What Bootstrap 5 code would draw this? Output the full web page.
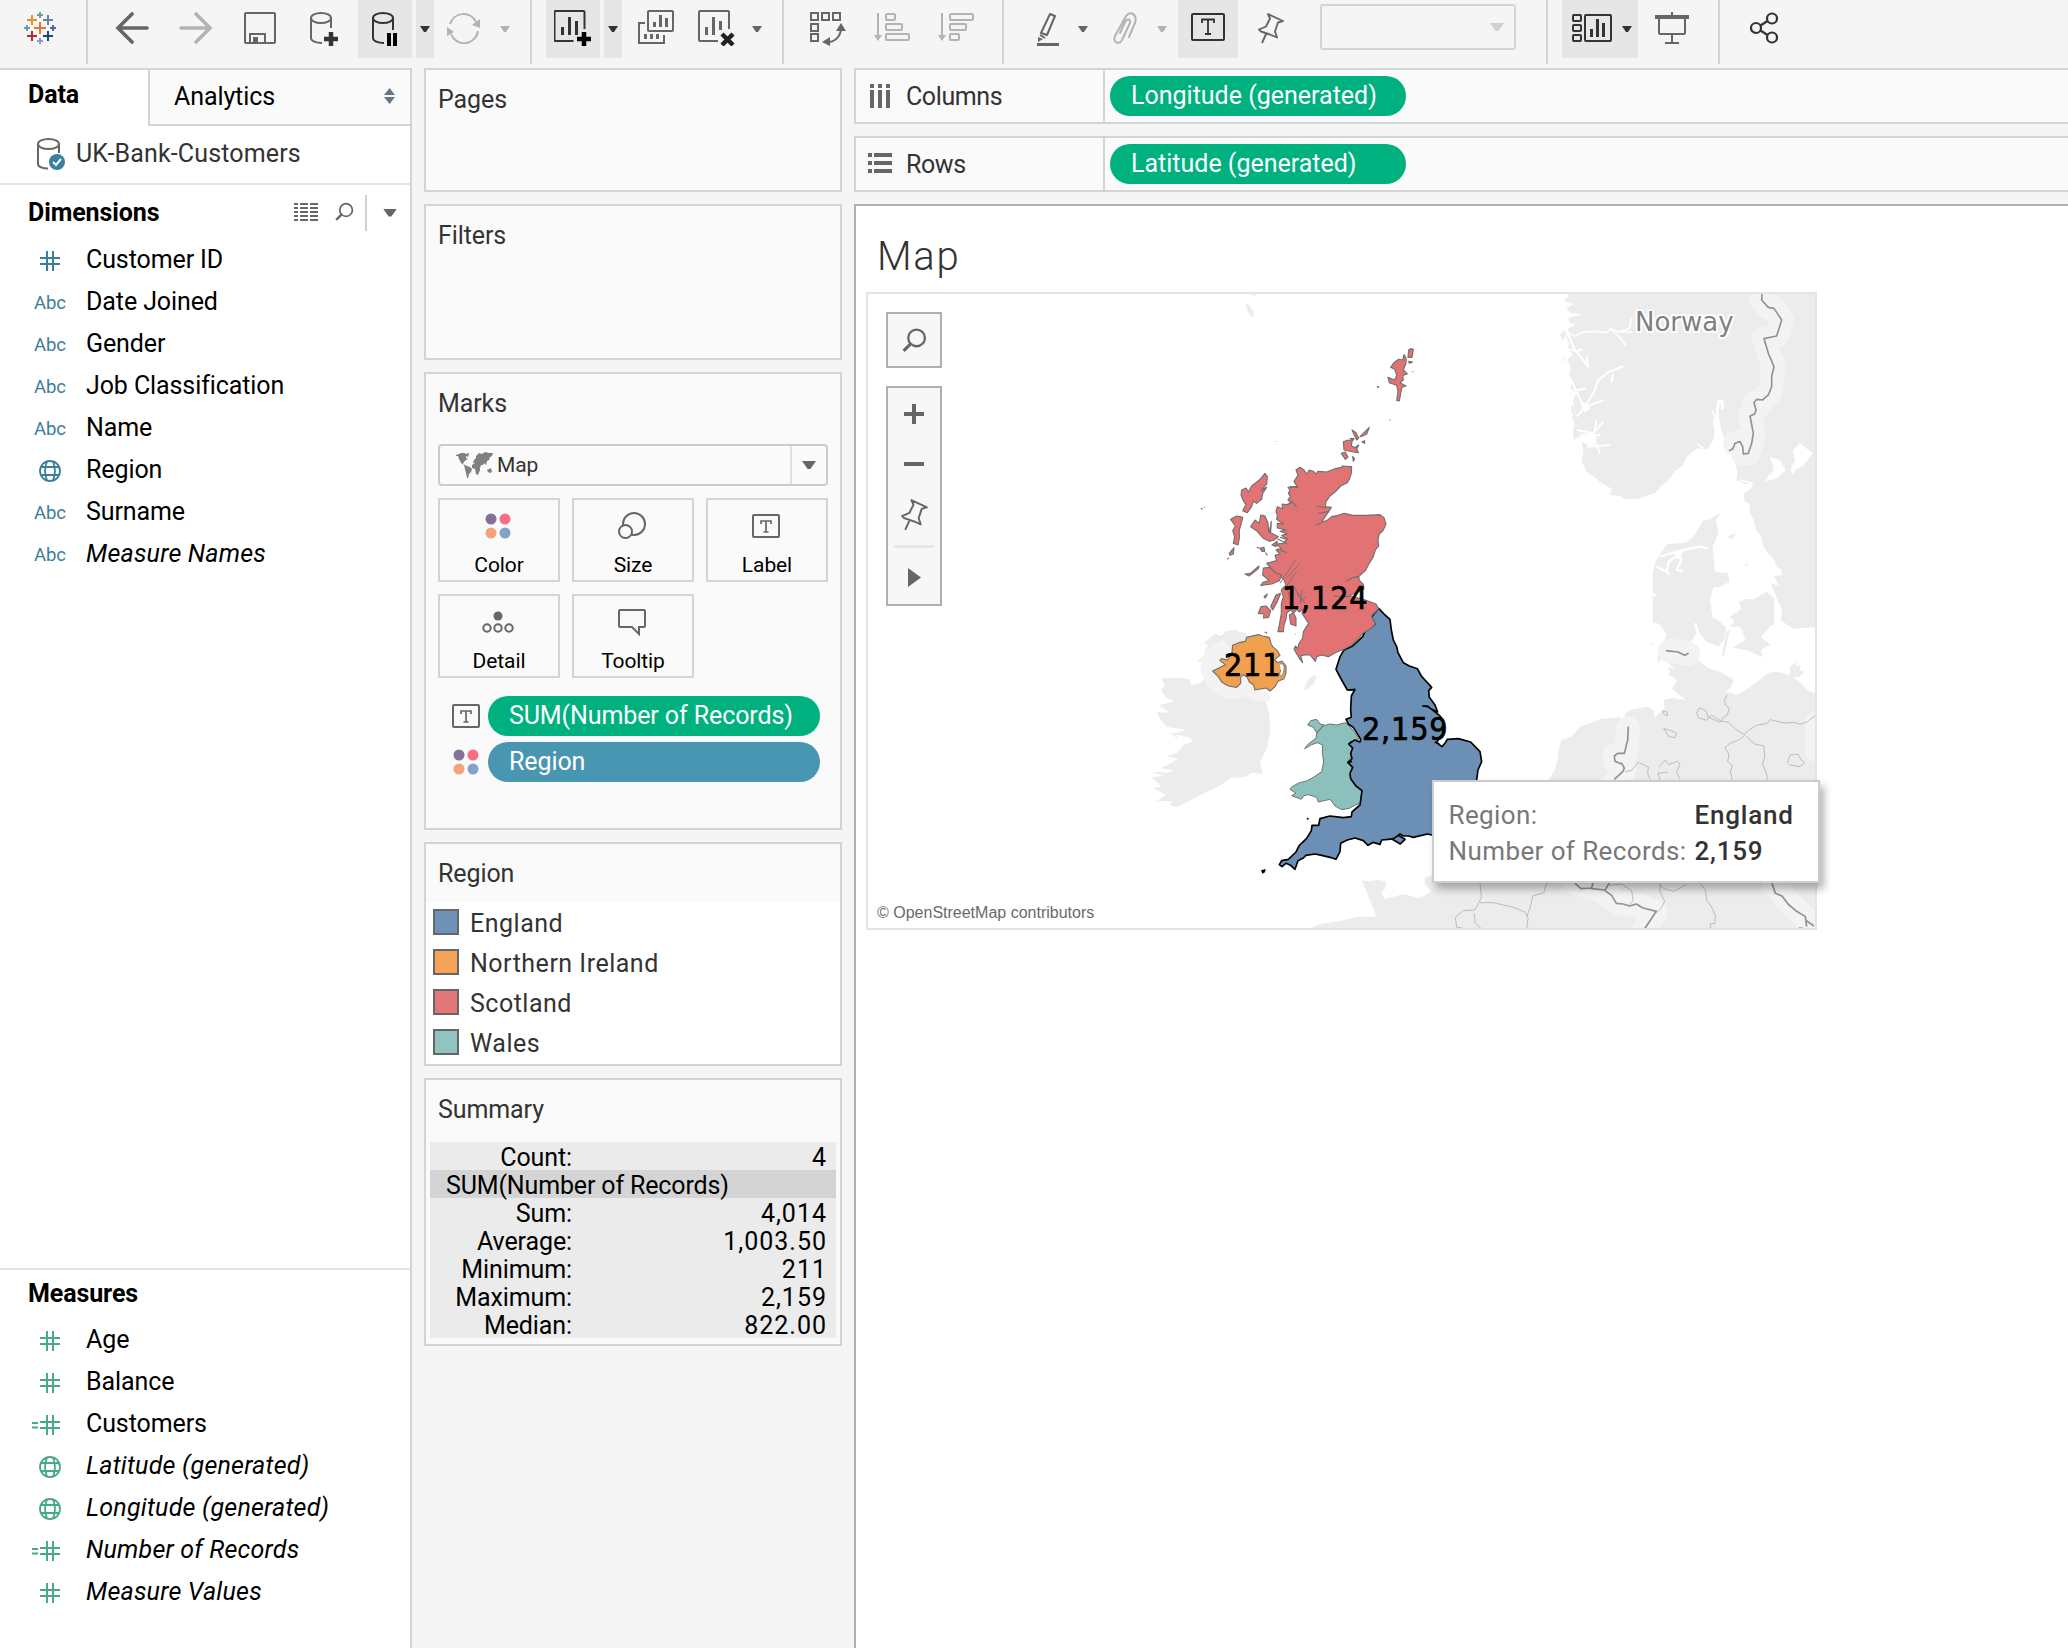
<!DOCTYPE html>
<html lang="en">
<head>
<meta charset="utf-8">
<meta name="viewport" content="width=device-width, initial-scale=1">
<title>Map - UK-Bank-Customers</title>
<link href="https://cdn.jsdelivr.net/npm/bootstrap@5.3.0/dist/css/bootstrap.min.css" rel="stylesheet">
<style>
  html, body { height: 1648px; overflow: hidden; }
  body { background: #f5f5f5; color: #000; font-family: Roboto, "Liberation Sans", sans-serif; font-size: 25px; line-height: 1; width: 2068px; letter-spacing: -.1px; }
  svg { display: block; flex: none; }
  .ln { stroke: #666; fill: none; stroke-width: 2; }
  .tools { height: 68px; }
  .tools > * { margin-top: 12px; flex: none; }
  .tools > .hi { margin-top: 10px; }
  .tools > .rule { width: 2px; height: 64px; margin-top: 0; background: #d4d4d4; }
  .tools > .held { height: 58px; margin-top: 0; background: #e6e6e6; padding-top: 10px; }
  .tools > .tri { margin-top: 26px; }
  .tri { width: 10px; height: 6px; background: #666; clip-path: polygon(0 0, 100% 0, 60% 100%, 40% 100%); }
  .tri.pale { background: #b3b3b3; } .tri.dark { background: #333; }
  .tri.big { width: 14px; height: 8px; }
  .w18 { width: 18px; } .w54 { width: 54px; } .w60 { width: 60px; } .w76 { width: 76px; }
  .held .tri { margin-top: 16px; }
  .g4 { margin-left: 4px; } .g10 { margin-left: 10px; } .g11 { margin-left: 11px; } .g13 { margin-left: 13px; } .g14 { margin-left: 14px; } .g16 { margin-left: 16px; } .g17 { margin-left: 17px; }
  .g18 { margin-left: 18px; } .g19 { margin-left: 19px; } .g20 { margin-left: 20px; } .g24 { margin-left: 24px; } .g25 { margin-left: 25px; } .g26 { margin-left: 26px; }
  .g27 { margin-left: 27px; } .g28 { margin-left: 28px; } .g29 { margin-left: 29px; } .g30 { margin-left: 30px; } .g31 { margin-left: 31px; } .g33 { margin-left: 33px; }
  .g34 { margin-left: 34px; } .g36 { margin-left: 36px; }
  .t3 { margin-top: 3px; } .t6 { margin-top: 6px; } .t18 { margin-top: 18px; }
  .combo { width: 196px; height: 46px; border: 2px solid #d4d4d4; border-radius: 3px; padding: 0 10px; }
  .tools > .combo { margin-top: 4px; }
  .combo .tri { background: #d0d0d0; width: 14px; height: 8px; }

  .work { height: 1580px; }
  .datapane { width: 412px; background: #fff; border: solid #d4d4d4; border-width: 2px 2px 0 0; }
  .tabA { width: 148px; height: 56px; padding: 6px 0 0 28px; line-height: 38px; font-weight: 700; }
  .tabB { height: 56px; background: #fafafa; border: solid #d4d4d4; border-width: 0 0 2px 2px; padding: 0 15px 2px 24px; }
  .source { height: 59px; border-bottom: 2px solid #e4e4e4; padding: 0 0 2px 36px; color: #333; gap: 11px; letter-spacing: .15px; }
  .headrow { padding: 0 13px 0 28px; font-weight: 700; }
  .headrow.dim { height: 55px; }
  .headrow.dim svg { margin-top: -2px; }
  .headrow.mea { height: 50px; padding-bottom: 4px; }
  .vr2 { width: 2px; height: 36px; background: #d0d0d0; }
  .fieldrow { height: 42px; }
  .fieldrow .kind { width: 86px; color: #3a7d9c; font-size: 18.5px; padding: 1px 0 0 34px; }
  .fieldrow .txt { padding-bottom: 3px; }
  .fieldrow .txt.fst-italic { letter-spacing: .22px; }
  .kind svg { margin-left: -2px; margin-top: -1px; }
  .green .kind { color: #47a987; }
  .dims { height: 1085px; border-bottom: 2px solid #e4e4e4; }

  .shelfcol { width: 418px; margin-left: 12px; gap: 12px; }
  .pane { background: #fafafa; border: 2px solid #d4d4d4; color: #333; }
  .pane .cap { padding: 16px 0 0 12px; line-height: 28px; }
  .h124 { height: 124px; } .h156 { height: 156px; } .h458 { height: 458px; } .h224 { height: 224px; } .h268 { height: 268px; }
  .marktype { margin: 26px 12px 0; height: 42px; border: 2px solid #ccc; border-radius: 4px; font-size: 21px; }
  .marktype .more { width: 36px; border-left: 2px solid #e0e0e0; }
  .btns { margin: 12px 12px 0; gap: 12px; }
  .mk { width: 122px; height: 84px; border: 2px solid #d4d4d4; font-size: 21px; color: #000; }
  .mk .pic { height: 52px; margin-bottom: 3px; padding-right: 2px; }
  .pill { height: 40px; border-radius: 20px; color: #fff; padding: 0 0 1px 21px; background: #00b180; }
  .pill.blue { background: #4996b2; }
  .enc { margin-left: 26px; width: 368px; }
  .enc .pill { width: 332px; }
  .legend { height: 162px; background: #fff; margin-top: 14px; padding: 5px 0 0 7px; }
  .leg { height: 40px; gap: 11px; color: #333; letter-spacing: .5px; }
  .leg span { margin-top: -8px; }
  .sw { width: 26px; height: 26px; border: 2px solid #666; margin-top: -10px; }
  .stats { margin: 18px 4px 0; background: #ebebeb; color: #000; }
  .stats > div { height: 28px; line-height: 28px; padding-top: 2px; }
  .stats .k { width: 142px; text-align: right; }
  .stats .v { padding-right: 9px; letter-spacing: 1px; }
  .stats .grp { background: #d4d4d4; padding-left: 16px; letter-spacing: -.15px; }

  .viewcol { margin-left: 12px; }
  .shelf { height: 56px; border: solid #d4d4d4; border-width: 2px 0 2px 2px; background: #fafafa; margin-bottom: 12px; color: #333; }
  .shelf .who { width: 249px; border-right: 2px solid #d4d4d4; padding-left: 12px; gap: 14px; letter-spacing: -.4px; }
  .shelf .pill { width: 296px; margin: 6px 0 0 5px; padding-left: 21px; padding-bottom: 2px; letter-spacing: 0; }
  .view { background: #fff; border: solid #b0b0b0; border-width: 2px 0 0 2px; }
  .vtitle { font-size: 40px; font-weight: 300; height: 86px; padding: 31px 0 0 21px; color: #333; letter-spacing: 1.7px; }
  .mapbox { width: 951px; height: 638px; margin-left: 10px; }
  .ctl { background: #f7f7f7; border: 2px solid #b0b0b0; width: 56px; left: 20px; }
  .ctl.find { top: 20px; height: 56px; } .ctl.nav4 { top: 94px; height: 220px; }
  .tip { left: 566px; top: 488px; width: 388px; height: 103px; background: #fff; border: 2px solid #ccc; box-shadow: 4px 6px 8px rgba(0,0,0,.3); padding: 14.5px 0 0 14.5px; font-size: 26px; line-height: 36px; color: #787878; letter-spacing: .4px; }
  .tip .a { width: 246px; } .tip .b { color: #333; font-weight: 500; letter-spacing: .8px; }
  .land { fill: #ececec; } .sea { fill: #fff; } .fj { stroke: #fff; fill: none; stroke-linejoin: round; }
  .halo { stroke: #f3f3f3; stroke-width: 72; fill: none; stroke-linejoin: round; stroke-linecap: round; }
  .bord { stroke: #929292; stroke-width: 5; fill: none; stroke-linejoin: round; }
  .prov { stroke: #b2b2b2; stroke-width: 2.5; fill: none; stroke-linejoin: round; }
  .sco { fill: #e27375; stroke: #707070; stroke-width: 3.4; stroke-linejoin: round; }
  .nir { fill: #f1a04f; stroke: #707070; stroke-width: 3.4; stroke-linejoin: round; }
  .wal { fill: #8cc0bc; stroke: #707070; stroke-width: 3; stroke-linejoin: round; }
  .eng { fill: #6c8fb5; stroke: #000; stroke-width: 5; stroke-linejoin: round; }
  .num { font: 400 32px "DejaVu Sans Condensed", "DejaVu Sans", sans-serif; font-stretch: condensed; letter-spacing: .8px; stroke: #000; stroke-width: .7px; }
  .town { font: 26px "DejaVu Sans", sans-serif; letter-spacing: 0; fill: #808080; stroke: #fff; stroke-width: 4px; paint-order: stroke; stroke-linejoin: round; }
  .attrib { font: 16px "Liberation Sans", sans-serif; letter-spacing: 0; fill: #6a6a6a; }
</style>
</head>
<body>
<svg width="0" height="0" class="position-absolute">
  <symbol id="hash" viewBox="0 0 36 24"><path d="M15 2v20M21 2v20M8 9h20M8 15h20" stroke="currentColor" stroke-width="2" fill="none"/></symbol>
  <symbol id="calc" viewBox="0 0 36 24"><path d="M15 2v20M21 2v20M8 9h20M8 15h20M0 10h6M0 14.500h6" stroke="currentColor" stroke-width="2" fill="none"/></symbol>
  <symbol id="globe" viewBox="0 0 36 24"><g stroke="currentColor" stroke-width="1.800" fill="none"><circle cx="18" cy="12" r="10"/><path d="M9 8h18M9 16h18M15 2.500c-2.500 6-2.500 13 0 19M21 2.500c2.500 6 2.500 13 0 19"/></g></symbol>
  <symbol id="tbox" viewBox="0 0 28 24"><rect x="1" y="1" width="26" height="22" rx="1" fill="none" stroke="#666" stroke-width="2"/><path d="M9 10V7h10v3M14 7v11M11.500 18h5" fill="none" stroke="#666" stroke-width="1.700"/></symbol>
  <symbol id="dots" viewBox="0 0 26 26"><circle cx="6" cy="6" r="5.500" fill="#857098"/><circle cx="20" cy="6" r="5.500" fill="#f76f80"/><circle cx="6" cy="20" r="5.500" fill="#f0a579"/><circle cx="20" cy="20" r="5.500" fill="#82a2ca"/></symbol>
  <symbol id="pin" viewBox="0 0 26 32"><path d="M10 2l15 7-5 1.500-3 9 2 6-7-3-9-3-2-2 7-3 4-8zM8.500 21L4 31" fill="none" stroke="#666" stroke-width="1.900" stroke-linejoin="round"/></symbol>
  <symbol id="lens" viewBox="0 0 24 24"><circle cx="14" cy="9.500" r="8" fill="none" stroke="#666" stroke-width="2.200"/><path d="M8.500 15L1.500 22" stroke="#666" stroke-width="3"/></symbol>
</svg>

<header class="tools d-flex align-items-start">
  <svg class="g24" width="32" height="32" viewBox="0 0 32 32" fill="none"><path d="M16 10v12M10 16h12" stroke="#e8762c" stroke-width="2"/><path d="M8 3v10M3 8h10" stroke="#eb912c" stroke-width="2"/><path d="M24 3v10M19 8h10" stroke="#5c8aa8" stroke-width="2"/><path d="M8 19v10M3 24h10" stroke="#c72035" stroke-width="2"/><path d="M24 19v10M19 24h10" stroke="#1f457e" stroke-width="2"/><path d="M16 0v6M13 3h6M3 13v6M0 16h6" stroke="#7199a6" stroke-width="2"/><path d="M29 13v6M26 16h6" stroke="#5b6591" stroke-width="2"/><path d="M16 26v6M13 29h6" stroke="#8e9cc0" stroke-width="2"/></svg>
  <i class="rule g30"></i>
  <svg class="g27" width="34" height="32" viewBox="0 0 34 32"><path d="M32 16H3M17 2L3 16l14 14" fill="none" stroke="#666" stroke-width="3.600" stroke-linecap="round"/></svg>
  <svg class="g30" width="34" height="32" viewBox="0 0 34 32"><path d="M2 16h29M17 2l14 14-14 14" fill="none" stroke="#b3b3b3" stroke-width="3.600" stroke-linecap="round"/></svg>
  <svg class="g31" width="32" height="32" viewBox="0 0 32 32"><rect x="1" y="1" width="30" height="30" rx="1" class="ln"/><path d="M6 31V22h15v9" class="ln"/><path d="M9 25h5v6H9z" fill="#666"/></svg>
  <svg class="g34" width="28" height="34" viewBox="0 0 28 34"><path d="M1 6v20c0 3 5 5 11 5M21 6v10" class="ln"/><ellipse cx="11" cy="6" rx="10" ry="5" class="ln"/><path d="M21 20v14M14 27h14" stroke="#333" stroke-width="4.500"/></svg>
  <div class="held w54 g20"><svg class="mx-auto" width="26" height="38" viewBox="0 0 26 38"><g fill="none" stroke="#333" stroke-width="2"><path d="M1 8v20c0 3 5 5 11 5M21 8v12"/><ellipse cx="11" cy="8" rx="10" ry="5"/></g><path d="M15 23h4v13h-4zM21 23h4v13h-4z"/></svg></div>
  <div class="held w18 g4"><div class="tri dark mx-auto"></div></div>
  <svg class="g13" width="33" height="32" viewBox="0 0 33 32"><path d="M3 12A14 14 0 0 1 29 10M31 19A14 14 0 0 1 4 22" fill="none" stroke="#b3b3b3" stroke-width="2"/><path d="M33 7v9l-8-3zM0 15v9l7-4z" fill="#b3b3b3"/></svg>
  <i class="tri pale g20"></i>
  <i class="rule g20"></i>
  <div class="held w54 g14"><svg class="ms-2" width="38" height="38" viewBox="0 0 38 38"><path d="M30 19V2a1 1 0 0 0-1-1H1a1 1 0 0 0-1 1v28a1 1 0 0 0 1 1h18" fill="none" stroke="#333" stroke-width="2" transform="translate(.5 0)"/><path d="M7 17h3v8H7zM14 7h3v18h-3zM21 11h3v14h-3z" fill="#333"/><path d="M30 22v14M23 29h14" stroke="#000" stroke-width="4.500"/></svg></div>
  <div class="held w18 g4"><div class="tri dark mx-auto"></div></div>
  <svg class="g16 hi" width="36" height="34" viewBox="0 0 36 34"><rect x="10" y="1" width="25" height="20" rx="1" class="ln"/><path d="M7 13H1v20h25v-8" class="ln"/><path d="M15 12h3v5h-3zM21 5h3v12h-3zM27 8h3v9h-3zM6 24h3v5H6zM12 24h3v5h-3zM18 24h3v5h-3z" fill="#666"/></svg>
  <svg class="g24 hi" width="37" height="36" viewBox="0 0 37 36"><path d="M31 19V2a1 1 0 0 0-1-1H2a1 1 0 0 0-1 1v28a1 1 0 0 0 1 1h18" class="ln"/><path d="M7 17h3v8H7zM14 7h3v18h-3zM21 11h3v9h-3z" fill="#666"/><path d="M24 24l11 11M35 24L24 35" stroke="#222" stroke-width="4.500"/></svg>
  <i class="tri g17"></i>
  <i class="rule g20"></i>
  <svg class="g26" width="36" height="34" viewBox="0 0 36 34"><g class="ln"><rect x="1" y="1" width="7" height="7"/><rect x="12" y="1" width="7" height="7"/><rect x="23" y="1" width="7" height="7"/><rect x="1" y="12" width="7" height="7"/><rect x="1" y="22" width="7" height="7"/><path d="M31 16c0 9-7 14-13 14"/></g><path d="M31 11l5 8H26zM12 30l8-5v9z" fill="#666"/></svg>
  <svg class="g28" width="36" height="32" viewBox="0 0 36 32"><g fill="none" stroke="#b3b3b3" stroke-width="2"><path d="M4 1v26"/><rect x="12" y="2" width="9" height="6" rx="1"/><rect x="12" y="12" width="16" height="6" rx="1"/><rect x="12" y="22" width="23" height="6" rx="1"/></g><path d="M0 23h8l-4 6z" fill="#b3b3b3"/></svg>
  <svg class="g28" width="36" height="32" viewBox="0 0 36 32"><g fill="none" stroke="#b3b3b3" stroke-width="2"><path d="M4 1v26"/><rect x="12" y="2" width="23" height="6" rx="1"/><rect x="12" y="12" width="16" height="6" rx="1"/><rect x="12" y="22" width="9" height="6" rx="1"/></g><path d="M0 23h8l-4 6z" fill="#b3b3b3"/></svg>
  <i class="rule g28"></i>
  <svg class="g33" width="22" height="34" viewBox="0 0 22 34"><path d="M13 2l5 2-8 19-6-2zM3 23l5 3" class="ln" stroke-linejoin="round"/><path d="M1 25l5 2-5 3zM0 31h22v3H0z" fill="#666"/></svg>
  <i class="tri g19"></i>
  <svg class="g25" width="24" height="32" viewBox="0 0 24 32"><path d="M16 25l6-14c3-9-6-14-10-5L2 24c-3 7 5 9 7 4l8-17c1-4-3-5-5-1L7 21" fill="none" stroke="#b3b3b3" stroke-width="2" stroke-linecap="round"/></svg>
  <i class="tri pale g20"></i>
  <div class="held w60 g11"><svg class="mx-auto t3" width="34" height="28" viewBox="0 0 34 28"><rect x="1" y="1" width="32" height="26" rx="1" fill="none" stroke="#333" stroke-width="2"/><path d="M11 10V6.500h12V10M17 6.500V21M14 21h6" fill="none" stroke="#333" stroke-width="1.800"/></svg></div>
  <svg class="g20" width="26" height="32"><use href="#pin"/></svg>
  <div class="combo g36 d-flex align-items-center justify-content-end"><div class="tri"></div></div>
  <i class="rule g30"></i>
  <div class="held w76 g14 d-flex"><svg class="g10" width="40" height="34" viewBox="0 0 40 34"><g fill="none" stroke="#333" stroke-width="2"><rect x="1" y="5" width="8" height="6" rx="1"/><rect x="1" y="15" width="8" height="6" rx="1"/><rect x="1" y="25" width="8" height="6" rx="1"/><rect x="13" y="5" width="26" height="26" rx="1"/></g><path d="M18 19h3v8h-3zM24 9h3v18h-3zM30 13h3v14h-3z" fill="#333"/></svg><div class="tri dark g10"></div></div>
  <svg class="g17" width="34" height="32" viewBox="0 0 34 32"><path d="M0 3h34v4H0z" fill="#666"/><path d="M17 0v4M4 6v15a1 1 0 0 0 1 1h24a1 1 0 0 0 1-1V6M17 22v8M10 31h14" class="ln"/></svg>
  <i class="rule g29"></i>
  <svg class="g30" width="28" height="32" viewBox="0 0 28 32"><g fill="none" stroke="#333" stroke-width="2.200"><circle cx="6" cy="16" r="5"/><circle cx="22" cy="6.500" r="5"/><circle cx="22" cy="25.500" r="5"/><path d="M10.500 13.500l7-4.500M10.500 18.500l7 4.500"/></g></svg>
</header>

<main class="work d-flex">
  <aside class="datapane d-flex flex-column flex-shrink-0">
    <div class="d-flex">
      <div class="tabA">Data</div>
      <div class="tabB flex-grow-1 d-flex align-items-center justify-content-between"><span>Analytics</span>
        <svg width="11" height="16" viewBox="0 0 11 16"><path d="M5.500 0l5.500 7H0zM0 9h11l-5.500 7z" fill="#66758a"/></svg></div>
    </div>
    <div class="source d-flex align-items-center">
      <svg width="29" height="32" viewBox="0 0 29 32"><path d="M2 6v20c0 3 5 4.500 10 4.500M23 6v9" class="ln"/><ellipse cx="12.500" cy="6" rx="10.500" ry="5" class="ln"/><circle cx="21" cy="24" r="8" fill="#3a7f9e"/><path d="M17 24l3 3 5-6" fill="none" stroke="#fff" stroke-width="2"/></svg>
      <span>UK-Bank-Customers</span>
    </div>
    <div class="dims">
      <div class="headrow dim d-flex align-items-center"><span class="me-auto">Dimensions</span>
        <svg width="24" height="18" viewBox="0 0 24 18"><path d="M0 1h24M0 5h24M0 9h24M0 13h24M0 17h24" stroke="#666" stroke-width="2"/><path d="M5 0v18M15 0v18" stroke="#fff" stroke-width="2"/></svg>
        <svg class="g17" width="19" height="20"><use href="#lens"/></svg>
        <i class="vr2 g11"></i><i class="tri big g16"></i></div>
      <div class="fieldrow d-flex align-items-center"><span class="kind"><svg width="36" height="24"><use href="#hash"/></svg></span><span class="txt">Customer ID</span></div>
      <div class="fieldrow d-flex align-items-center"><span class="kind">Abc</span><span class="txt">Date Joined</span></div>
      <div class="fieldrow d-flex align-items-center"><span class="kind">Abc</span><span class="txt">Gender</span></div>
      <div class="fieldrow d-flex align-items-center"><span class="kind">Abc</span><span class="txt">Job Classification</span></div>
      <div class="fieldrow d-flex align-items-center"><span class="kind">Abc</span><span class="txt">Name</span></div>
      <div class="fieldrow d-flex align-items-center"><span class="kind"><svg width="36" height="24"><use href="#globe"/></svg></span><span class="txt">Region</span></div>
      <div class="fieldrow d-flex align-items-center"><span class="kind">Abc</span><span class="txt">Surname</span></div>
      <div class="fieldrow d-flex align-items-center"><span class="kind">Abc</span><span class="txt fst-italic">Measure Names</span></div>
    </div>
    <div class="green">
      <div class="headrow mea d-flex align-items-center"><span>Measures</span></div>
      <div class="fieldrow d-flex align-items-center"><span class="kind"><svg width="36" height="24"><use href="#hash"/></svg></span><span class="txt">Age</span></div>
      <div class="fieldrow d-flex align-items-center"><span class="kind"><svg width="36" height="24"><use href="#hash"/></svg></span><span class="txt">Balance</span></div>
      <div class="fieldrow d-flex align-items-center"><span class="kind"><svg width="36" height="24"><use href="#calc"/></svg></span><span class="txt">Customers</span></div>
      <div class="fieldrow d-flex align-items-center"><span class="kind"><svg width="36" height="24"><use href="#globe"/></svg></span><span class="txt fst-italic">Latitude (generated)</span></div>
      <div class="fieldrow d-flex align-items-center"><span class="kind"><svg width="36" height="24"><use href="#globe"/></svg></span><span class="txt fst-italic">Longitude (generated)</span></div>
      <div class="fieldrow d-flex align-items-center"><span class="kind"><svg width="36" height="24"><use href="#calc"/></svg></span><span class="txt fst-italic">Number of Records</span></div>
      <div class="fieldrow d-flex align-items-center"><span class="kind"><svg width="36" height="24"><use href="#hash"/></svg></span><span class="txt fst-italic">Measure Values</span></div>
    </div>
  </aside>

  <section class="shelfcol d-flex flex-column flex-shrink-0">
    <div class="pane h124"><div class="cap">Pages</div></div>
    <div class="pane h156"><div class="cap">Filters</div></div>
    <div class="pane h458"><div class="cap">Marks</div>
      <div class="marktype d-flex align-items-stretch">
        <div class="d-flex align-items-center flex-grow-1 gap-1 ps-3"><svg width="37" height="26" viewBox="0 0 37 26"><path d="M0 3l3-1 2-1 4 0 0 1 4-1-1 4-2-1 0 2 2 1-2 1-2 2-1 2 2 1 2 1 3 1 2 2-1 3-2 2-1 4-1 0-1-5-1-4-1-4-3-2-2-4-1-3-3 0zM18 8l2-2 0-2 3-3 3 1 3-2 4 1 4 0-1 3-2 1-1 3-2 1-1 4-2-2-1 2-2 0-1 3 0 2-2 5-2-1-1-5-3-1 0-3 3-2-2 0zM31 18l2-1 2-1 1 4-2 1-2-1z" fill="#808080"/></svg><span>Map</span></div>
        <div class="more d-flex align-items-center justify-content-center"><i class="tri big"></i></div>
      </div>
      <div class="btns d-flex flex-wrap">
        <div class="mk text-center"><div class="pic d-flex align-items-center justify-content-center"><svg width="26" height="26"><use href="#dots"/></svg></div>Color</div>
        <div class="mk text-center"><div class="pic d-flex align-items-center justify-content-center"><svg width="28" height="28" viewBox="0 0 28 28"><circle cx="16" cy="12" r="11" class="ln"/><circle cx="7.500" cy="19.500" r="6.500" fill="#fafafa" stroke="#666" stroke-width="2"/></svg></div>Size</div>
        <div class="mk text-center"><div class="pic d-flex align-items-center justify-content-center"><svg width="28" height="24"><use href="#tbox"/></svg></div>Label</div>
        <div class="mk text-center"><div class="pic d-flex align-items-center justify-content-center"><svg width="32" height="22" viewBox="0 0 32 22"><circle cx="16" cy="5" r="4.500" fill="#666"/><g class="ln"><circle cx="5" cy="17" r="3.700"/><circle cx="16" cy="17" r="3.700"/><circle cx="27" cy="17" r="3.700"/></g></svg></div>Detail</div>
        <div class="mk text-center"><div class="pic d-flex align-items-center justify-content-center"><svg width="28" height="27" viewBox="0 0 28 27"><path d="M2 1h24a1 1 0 0 1 1 1v15a1 1 0 0 1-1 1h-5v7l-7-7H2a1 1 0 0 1-1-1V2a1 1 0 0 1 1-1z" class="ln"/></svg></div>Tooltip</div>
      </div>
      <div class="enc t18 d-flex align-items-center justify-content-between"><svg width="28" height="24"><use href="#tbox"/></svg><div class="pill d-flex align-items-center">SUM(Number of Records)</div></div>
      <div class="enc t6 d-flex align-items-center justify-content-between"><svg width="28" height="26" viewBox="0 0 28 26"><use href="#dots" x="1" width="26" height="26"/></svg><div class="pill blue d-flex align-items-center">Region</div></div>
    </div>
    <div class="pane h224"><div class="cap">Region</div>
      <div class="legend">
        <div class="leg d-flex align-items-center"><i class="sw" style="background:#6f92b8"></i><span>England</span></div>
        <div class="leg d-flex align-items-center"><i class="sw" style="background:#f4a354"></i><span>Northern Ireland</span></div>
        <div class="leg d-flex align-items-center"><i class="sw" style="background:#e57678"></i><span>Scotland</span></div>
        <div class="leg d-flex align-items-center"><i class="sw" style="background:#90c4c0"></i><span>Wales</span></div>
      </div></div>
    <div class="pane h268"><div class="cap">Summary</div>
      <div class="stats">
        <div class="d-flex justify-content-between"><span class="k">Count:</span><span class="v">4</span></div>
        <div class="grp">SUM(Number of Records)</div>
        <div class="d-flex justify-content-between"><span class="k">Sum:</span><span class="v">4,014</span></div>
        <div class="d-flex justify-content-between"><span class="k">Average:</span><span class="v">1,003.50</span></div>
        <div class="d-flex justify-content-between"><span class="k">Minimum:</span><span class="v">211</span></div>
        <div class="d-flex justify-content-between"><span class="k">Maximum:</span><span class="v">2,159</span></div>
        <div class="d-flex justify-content-between"><span class="k">Median:</span><span class="v">822.00</span></div>
      </div></div>
  </section>

  <section class="viewcol flex-grow-1 d-flex flex-column">
    <div class="shelf d-flex"><div class="who d-flex align-items-center"><svg width="24" height="24" viewBox="0 0 24 24"><path d="M4 0v24M12 0v24M20 0v24" stroke="#666" stroke-width="4"/><path d="M0 5h24" stroke="#fafafa" stroke-width="2"/></svg><span>Columns</span></div><div class="pill d-flex align-items-center">Longitude (generated)</div></div>
    <div class="shelf d-flex"><div class="who d-flex align-items-center"><svg width="24" height="24" viewBox="0 0 24 24"><path d="M0 3h24M0 11h24M0 19h24" stroke="#666" stroke-width="4"/><path d="M5 0v24" stroke="#fafafa" stroke-width="2"/></svg><span>Rows</span></div><div class="pill d-flex align-items-center">Latitude (generated)</div></div>
    <div class="view flex-grow-1">
      <div class="vtitle">Map</div>
      <div class="mapbox position-relative">
        <svg width="951" height="638" viewBox="866 292 951 638">
          <rect x="866" y="292" width="951" height="638" fill="#fff"/>
          <path class="land" d="M1245 303l4 2 5 7-1 6-5-6zM1250 292h6l-1 5z"/>
          <!-- Scandinavia and the north of Denmark -->
          <g transform="translate(1420 280) scale(.33333)">
            <path class="land" d="M440 38L446 48 432 62 462 72 440 84 450 98 490 104 445 112 448 128 466 134 442 148 452 162 438 172 448 190 442 205 458 222 442 240 452 262 446 285 456 305 452 325 470 340 458 362 466 390 456 410 464 430 462 478 480 470 486 490 490 510 485 545 500 575 522 590 545 610 575 626 570 645 600 648 614 658 655 656 690 644 708 638 722 618 745 602 765 572 785 560 800 530 832 505 862 508 880 480 884 450 878 425 895 405 905 455 920 490 945 515 945 550 952 575 950 600 975 612 1000 610 990 630 970 640 975 665 990 672 988 695 1002 720 1008 750 1022 765 1028 795 1045 822 1062 838 1070 860 1085 870 1086 886 1062 888 1078 918 1052 910 1066 945 1082 980 1098 1005 1090 1020 1192 1020 1192 38z"/>
            <path class="land" d="M420 165l14-16 6 16-12 16zM430 236l5-2-2 16zM455 372l10 12-4 20-8-8zM460 440l10-6-2 44-8 0z"/>
            <path class="land" d="M698 1030V880L708 840 740 793 800 787 820 770 850 720 870 718 902 697 888 720 895 760 878 800 885 875 925 880 928 905 900 920 880 922 870 960 880 1030z"/>
            <path class="land" d="M920 770l28-10-10 18zM972 853l14-4-6 10zM955 962l40 0 45-27 22 20 0 80-132 5 40-40z"/>
            <path class="sea" d="M1050 530l30 10 17 30-27 25-34 10 10-18 16-17zM1140 490l38 30-28 38-22 10-10 16-7-14 14-30-6-30zM1184 655l6 0v30z"/>
            <g class="fj" stroke-width="5"><path d="M445 160l20 8 25-12 34-2 36 4 14-12 20 10 44 0M575 150l26 24 16 22M600 155l28-10 8-32"/><path stroke-width="6" d="M495 390l-30-65-20-40M470 330l30-5M495 380l30-50 10-30 28-22 48-20M575 308l4-26M500 380l50-20M470 410l30-35M480 475l60-10M500 500l70-5M540 520l-20-50 10-50M470 450l50 10 30-35M445 165l20 45 40 50-5-32M440 205l30 10 16-8"/><path stroke-width="9" d="M895 470l-6-45 6-60 12 0 0 24"/><path d="M890 430l-14-40M830 490l20 16M960 600l35 10M965 640l30-20"/><path stroke-width="7" d="M710 860l30 15 6-30 28-20 10 14-14 30 20 5M742 878l6 6M720 830l50-15 70-16 24 6M700 940l14 26-10 12"/></g>
            <path class="sea" d="M480 465l36-10 14 20-14 26-30-14zM482 366l20 4 8 18-18 10zM762 816l26-8-6 26-12 4z"/>
            <path class="halo" d="M1027 30l-2 30 20 22 17 3 23 35-15 48-38 8 13 44 17 40-7 30 0 30-10 25-17 15-26 8 6 22-18 18 10 52-5 30-10 30-15 2-2-22-8-15-15 5"/>
            <path class="bord" d="M1027 30l-2 30 20 22 17 3 23 35-15 48-38 8 13 44 17 40-7 30 0 30-10 25-17 15-18-2-8 10 6 22-4 12-14 6 10 52-5 30-10 30-15 2-2-22-8-15-15 5-6 16-12 6"/>
          </g>
          <!-- Low Countries, Germany, southern Denmark, France -->
          <g transform="translate(1420 600) scale(.33333)">
            <path class="land" d="M-345 992l45-20 60-8 50-14 60 0-25-60-20-50 20 4 30-4 25 5-5 22-12 10 10 20 57-14 45 12 18-8 20-14-18-20-2-20L110 800 250 700 350 590 385 540 402 515 414 480 415 450 425 420 455 410 480 380 540 358 600 352 605 378 612 375 615 340 640 325 680 318 700 330 705 355 718 338 728 330 728 300 760 294 800 300 776 285 756 265 772 242 745 222 764 206 745 190 742 160 735 130 738 100 720 74 698 60 705 30 700-10H860L850 30 820 66 830 100 812 125 842 152 832 180 868 206 900 215 942 240 932 262 918 275 950 285 990 262 1050 215 1085 218 1105 225 1140 245 1160 270 1185 280 1192 290V992z"/>
            <path class="land" d="M830 70l24-16 34 2 30 26-4 36-20 22-36-16-20-26zM930 50l30-20 10-32 90 0-20 44 16 30-34 40 30 22-30 16 6 22-40-18-30-8-22-2 40-24-10-30zM1092-10h100v92l-74 4-36-26zM930 90l-18 78-6-4 14-70zM715 150l8 30-10 10zM695 130l6 0-4 12zM742 200l20 6-10 10z"/>
            <path class="land" d="M1110 200l18-14-2 14 18-6-6 14 14 10-14 14-16-2 10 14-24-6z"/>
            <path class="fj" stroke-width="5" d="M430 405l26-34 50-20 100-20 90-16M1050 220l10-10M730 330l0-30M615 340l20-20 70-10 20-14"/>
            <path class="halo" d="M625 385l-8 75-34 5 4 22 26 18-6 30-40 30M750 152l30 4 24 6M470 850l60 16 50 30 20 14 60 8 48 18-34 50M1060 850l60 70 50 50M1190 370v80"/>
            <path class="bord" d="M625 380l-2 40-10 40-20 0-10 8 2 16 14 6 6 0 8 14-4 10-26 24M738 152l36 4 20 10 12-6M465 850l18 16 32-2 4-16M515 866l40 4 14-22M555 872l20 14 14 24 20 2 20 6 20-6 20 12 40 10-36 54M1056 850l10 30 20 8 18 24 26 22 26 16 4 30M1156 960l26 18M1130 990l10-6 20 4"/>
            <path class="prov" d="M922 285l-8 14 2 16 12 10-6 20-10 6-12 16-36-16-6-18-18-10-10 16 6 14 24 8 14-16 28 18 24 4 22 22 24 14 14-12 26-16 28-4 10-12 44 10 30-2 16 6 22-8 20-16 16-12 4-12 10 14 14 4M975 405l-20 16-24 8-16 14 12 20-4 20 14 14-6 20 6 24M980 410l24 22 28 6 2 30-6 24 12 30 2 18M1102 490l8-24 24-4 8 16 12 10-14 12-34-6M730 385l26 8 14 8-6 12-18-4-14-22M728 332l14 4 0 12-12-8zM615 515l20-4 20-24 30 14-2 20 8 18M718 500l18-20 10 14 26-10 8 8-10 26 10 20M720 540l-6-20 30-4M180 850l4 40-6 16-14 24-34 2-24 20 4 30 18 2M162 940l4 30 18 16M180 908l40 0 60 14 34 14 10 18-4 36M320 950l10-26 8-36 34-10 8-30M565 856l40-4 30 20 4 30-10 12M720 850l0 24 14 30-10 20-20 20M720 856l12 10 28 8 40-20M840 850l16 20 4 30 14 20 12 26-2 24-14 2 4 18"/>
          </g>
          <!-- Ireland, Isle of Man, Wales, England -->
          <g transform="translate(1140 590) scale(.33333)">
            <path class="land" d="M62 265L120 263 148 268 155 285 180 280 200 260 225 240 200 225 182 214 168 215 185 203 202 196 192 186 205 165 190 160 225 132 245 138 255 125 285 118 300 126 320 130 340 200 372 290 378 340 388 370 390 425 380 478 360 515 368 552 335 548 318 560 270 565 235 590 195 608 150 632 110 652 88 645 98 634 50 632 78 615 38 594 64 590 35 562 72 558 36 545 88 548 100 540 60 535 95 518 115 505 78 500 112 488 130 465 158 455 150 442 95 432 140 420 80 410 62 390 50 366 88 368 58 345 102 335 76 320 62 300 76 285zM492 298L500 274 522 254 530 260 520 282 500 300zM85 425l28 14-4 4z"/>
            <path d="M250 150c-60 20-80 70-60 110 20 60 90 80 130 60 40 20 70 20 72 0" fill="#f3f3f3"/>
            <path class="nir" d="M218 243L235 235 256 224 240 212 244 206 262 210 276 188 278 166 300 157 316 154 320 142 355 134 368 138 388 142 392 158 398 170 412 182 420 196 404 208 412 218 426 213 438 228 438 250 432 266 414 274 405 290 390 303 378 294 345 300 340 284 328 276 322 262 310 254 302 262 302 280 290 292 265 288 245 276 235 260z"/>
            <path d="M420 222c12-4 16 10 10 26-4 16-16 14-8-8" fill="#fff" stroke="#707070" stroke-width="3"/>
            <path class="wal" d="M548 408L570 402 590 405 616 398 632 412 645 428 656 448 628 456 638 480 632 500 622 518 638 530 630 560 646 588 666 602 662 640 645 645 628 655 605 659 585 648 570 628 535 636 530 622 505 614 490 618 484 628 455 617 468 610 450 598 456 590 478 578 500 573 520 562 545 545 551 515 547 490 548 465 532 458 515 464 505 470 494 476 505 462 528 445 530 430zM503 405L512 392 530 388 540 402 553 405 530 428 520 412z"/>
            <path class="eng" d="M716 55L735 75 750 88 754 120 760 150 770 170 774 188 790 218 808 228 832 236 844 258 866 282 875 292 866 302 868 322 885 345 893 366 875 358 862 348 848 348 864 350 880 362 898 376 910 390 912 410 908 432 898 445 890 458 906 470 916 458 922 448 955 446 992 456 1020 485 1025 515 1014 540 1010 570 1005 600 1020 660 950 735 875 735 862 732 820 742 806 738 790 738 780 732 765 745 745 748 725 750 720 763 700 757 684 766 670 752 645 744 622 750 602 760 600 785 588 808 570 802 545 796 525 792 498 796 490 804 474 812 465 838 452 826 438 820 426 830 418 824 425 812 445 808 468 786 478 766 500 745 514 722 516 706 536 706 540 686 570 678 610 683 634 680 636 666 660 645 666 602 648 588 632 566 630 550 638 532 624 518 636 506 632 490 638 474 626 462 644 450 660 456 662 448 650 428 640 412 625 402 618 388 634 382 632 360 634 318 644 300 622 300 605 270 588 238 600 200 612 180 638 168 668 140 675 125 705 102 694 82z"/>
            <path class="eng" d="M757 748l18-12 20 12-14 14z"/><path d="M363 841l14-4-2 10-8 4z"/><circle cx="503" cy="686" r="3"/><path class="eng" d="M622 518l14-4M884 456l14 6M624 300l22-2"/>
          </g>
          <!-- Scotland -->
          <g transform="translate(1140 330) scale(.33333)" class="sco">
            <path d="M468 420L480 412 492 420 500 432 508 420 520 424 528 432 534 424 560 426 585 416 608 412 606 408 635 410 634 430 628 448 622 458 602 468 585 486 570 498 558 515 556 530 574 532 566 545 552 565 545 576 560 572 575 560 595 556 612 550 640 556 680 556 720 554 732 563 738 582 730 600 718 612 714 630 716 648 706 660 700 680 688 700 676 722 656 740 658 750 670 764 672 776 650 788 628 796 640 802 665 806 690 815 708 822 716 836 694 858 706 882 690 898 668 910 655 925 635 945 612 958 590 966 565 980 545 975 530 980 526 994 510 975 495 974 482 978 488 998 478 985 462 958 466 948 474 956 476 942 488 925 490 905 506 880 498 868 486 850 490 836 478 846 470 838 462 848 450 840 440 850 438 868 432 885 430 905 414 905 418 885 424 850 424 820 430 800 424 780 438 765 430 745 410 738 405 728 380 700 410 692 405 676 420 672 408 660 425 656 408 642 430 640 440 628 425 616 442 612 420 604 438 600 412 594 412 580 430 582 410 568 412 555 408 545 412 530 428 536 426 522 440 524 452 520 444 508 452 500 445 490 450 480 444 472 472 470 462 455 468 445 474 436z"/>
            <path fill="none" d="M530 528L556 534M528 586L545 578M565 545L535 550M618 754L640 742 658 740M580 798L628 800M470 532L455 512M475 472L450 470M440 524L458 516M442 642L412 626M440 668L412 656M444 628L420 622M486 570"/>
            <path d="M305 480L318 474 325 486 335 468 358 450 375 430 382 440 380 462 364 482 380 472 368 490 365 508 350 520 340 514 335 530 322 548 308 542 318 524 310 512 303 495zM272 568L290 558 308 562 304 580 298 600 298 625 294 645 280 640 284 620 278 602 286 588zM268 670L282 653 280 672 270 676zM332 590L345 570 358 580 362 555 375 558 384 580 386 605 415 620 402 630 388 634 370 625 350 602zM370 714L390 712 405 728 425 735 418 752 395 762 362 766 370 756 388 752 368 735zM355 850L363 830 378 828 392 842 386 862 370 864 372 852zM392 830L408 795 422 790 412 815 398 840zM448 855L460 848 468 865 468 888 452 882zM315 732L331 730 357 708 355 716 327 738zM360 655L372 652 374 664 366 664zM396 645L412 634 408 650zM388 606L394 574 392 606zM610 335L624 330 636 334 634 348 650 355 655 368 640 366 612 360zM604 370L616 366 624 382 616 388zM636 300L648 308 656 324 650 330zM660 320L688 292 680 312 668 318zM666 336L674 332 674 340zM638 380L644 386 640 394zM648 350L656 345 652 354zM630 326L642 326 638 332z"/>
            <path d="M762 98L776 88 788 90 792 74 798 84 798 100 790 120 802 132 788 136 790 150 780 158 798 168 786 172 782 190 778 213 770 211 774 185 770 166 748 158 744 142 764 150 770 136 764 118 752 112zM806 60l6-4 8 2-4 24-12 0zM806 94l12 2-10 4zM712 170l3 0 0 3zM750 268l1 3M818 124l2 2M408 334l1 1M182 535l6 3M192 534l1-2M262 688l4-5M372 800l10-8-6 12zM374 906l8 4M376 668l6 8M466 912l1 1M350 652l8 3"/>
            <path fill="none" stroke-width="2.600" d="M462 770l24 40M470 790l26 30M440 770l8 30M486 780l-6 40 16-20M420 760L466 690M440 745L478 702M438 770L470 725"/>
          </g>
          <rect x="867" y="293" width="949" height="636" fill="none" stroke="#e4e4e4" stroke-width="2"/>
          <text x="1635" y="331" class="town">Norway</text>
          <g class="num"><text x="1282" y="609">1,124</text><text x="1224" y="676">211</text><text x="1362" y="740">2,159</text></g>
          <text x="877" y="918" class="attrib">© OpenStreetMap contributors</text>
        </svg>
        <div class="ctl find position-absolute d-flex align-items-center justify-content-center"><svg width="25" height="25"><use href="#lens"/></svg></div>
        <div class="ctl nav4 position-absolute"><svg width="52" height="216" viewBox="0 0 52 216"><path d="M16 26h20M26 16v20M16 76h20" stroke="#666" stroke-width="4" fill="none"/><use href="#pin" x="13" y="110" width="27" height="33"/><path d="M6 158.500h40" stroke="#e0e0e0" stroke-width="2"/><path d="M20 180l13 9.500-13 9.500z" fill="#666"/></svg></div>
        <div class="tip position-absolute"><div class="d-flex"><span class="a">Region:</span><span class="b">England</span></div><div class="d-flex"><span class="a">Number of Records:</span><span class="b">2,159</span></div></div>
      </div>
    </div>
  </section>
</main>
<script src="https://cdn.jsdelivr.net/npm/bootstrap@5.3.0/dist/js/bootstrap.bundle.min.js"></script>
</body>
</html>
